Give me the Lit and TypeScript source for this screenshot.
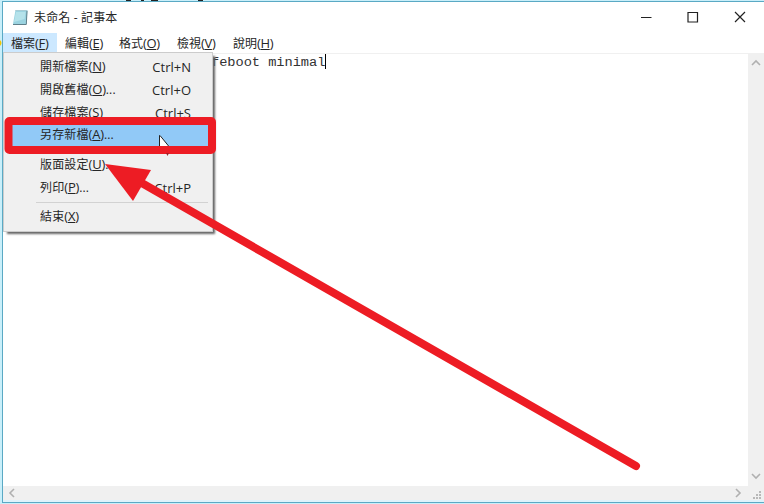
import { LitElement, html, css, svg } from "lit";
import { customElement } from "lit/decorators.js";

type Item = { label: string; key: string; more?: boolean; shortcut?: string; active?: boolean };

const MENUS: [string, string][] = [["檔案", "F"], ["編輯", "E"], ["格式", "O"], ["檢視", "V"], ["說明", "H"]];

const ITEMS: (Item | null)[] = [
  { label: "開新檔案", key: "N", shortcut: "Ctrl+N" },
  { label: "開啟舊檔", key: "O", more: true, shortcut: "Ctrl+O" },
  { label: "儲存檔案", key: "S", shortcut: "Ctrl+S" },
  { label: "另存新檔", key: "A", more: true, active: true },
  null,
  { label: "版面設定", key: "U", more: true },
  { label: "列印", key: "P", more: true, shortcut: "Ctrl+P" },
  null,
  { label: "結束", key: "X" },
];

@customElement("app-root")
export class AppRoot extends LitElement {
  static styles = css`
    :host {
      display: block;
      position: relative;
      box-sizing: border-box;
      width: 764px;
      height: 504px;
      overflow: hidden;
      padding: 1px 0 0 2px;
      background: #c9effa;
      color: #262626;
      font: 12px/20px "Open Sans", "Noto Sans CJK TC", sans-serif;
    }
    .window {
      box-sizing: border-box;
      width: 762px;
      height: 502px;
      display: flex;
      flex-direction: column;
      background: #fff;
      border: solid #5aa9c4;
      border-width: 1px 0 1px 1px;
    }
    .title {
      height: 31px;
      flex: none;
      display: flex;
      align-items: center;
      padding-left: 9px;
    }
    .name { margin-left: 6px; flex: 1; letter-spacing: 0.15px; }
    .title svg { display: block; }
    .bar {
      height: 20px;
      flex: none;
      display: flex;
      border-bottom: 1px solid #f0f0f0;
    }
    .menu {
      box-sizing: border-box;
      padding-left: 8px;
      height: 20px;
      white-space: nowrap;
      line-height: 21px;
    }
    .m0 { width: 54px; background: #cce8ff; }
    .m1 { width: 54px; }
    .m2 { width: 58px; }
    .m3 { width: 56px; }
    .k { font-size: 13px; line-height: 1; letter-spacing: -0.35px; }
    .k u { text-underline-offset: 1px; text-decoration-thickness: 1px; }
    .body {
      flex: 1;
      display: grid;
      grid-template-columns: 1fr 16px;
      grid-template-rows: 1fr 14px;
      border-bottom: 2px solid #dff3fb;
    }
    .text {
      padding: 0 0 0 208px;
      font: 13.7px/18px "Liberation Mono", monospace;
      white-space: pre;
      letter-spacing: -0.05px;
      color: #333;
    }
    .caret { display: inline-block; width: 1px; height: 15px; background: #000; vertical-align: -3px; }
    .track { background: #f0f0f0; display: flex; justify-content: space-between; align-items: center; }
    .v { flex-direction: column; }
    .popup {
      position: absolute;
      left: 3px;
      top: 52px;
      box-sizing: border-box;
      width: 210px;
      height: 180px;
      padding: 3px 2px 2px;
      background: #f0f0f0;
      border: 1px solid #ccc;
      box-shadow: 3px 3px 2px -1px #666;
    }
    .item {
      height: 22.7px;
      box-sizing: border-box;
      display: flex;
      align-items: center;
      padding: 0 19px 0 34px;
      white-space: nowrap;
    }
    .item .label { flex: 1; letter-spacing: 0.15px; }
    .item .k { letter-spacing: -0.2px; }
    .short { font-size: 13px; }
    .active { background: #91c9f7; }
    .sep { height: 1px; margin: 3px 2px 3px 30px; background: #d2d2d2; }
    .over { position: absolute; left: 0; top: 0; }
  `;

  render() {
    return html`
      <div class="window">
        <div class="title">
          <svg width="16" height="18" viewBox="0 0 16 18">
            <path d="M3.500 1H15.500L14.500 15H1Z" fill="#9bd3e0" />
            <path d="M4 3H13.500L12.500 10L2 13Z" fill="#b5e2ea" />
            <path d="M15 2L14.300 15.500H1" fill="none" stroke="#5f7f8a" />
            <path d="M3.500 1.500H15" stroke="#b4c3c8" stroke-dasharray="1 1" />
          </svg>
          <span class="name">未命名 - 記事本</span>
          <svg width="124" height="30" viewBox="0 0 124 30" fill="none" stroke="#222">
            <path d="M1 14.500H11.500" /><path d="M48 9.500H57.500V19H48Z" stroke-width="1.2" /><path d="M95 9L105 19M105 9L95 19" stroke-width="1.2" />
          </svg>
        </div>
        <div class="bar">
          ${MENUS.map(([l, k], i) => html`<div class="menu m${i}">${l}<span class="k">(<u>${k}</u>)</span></div>`)}
        </div>
        <div class="body">
          <div class="text">feboot minimal<span class="caret"></span></div>
          <div class="track v">${this.chevron("M4 11L8 7L12 11")}${this.chevron("M4 4L8 8L12 4")}</div>
          <div class="track">${this.chevron("M11 4L7 8L11 12")}${this.chevron("M4 4L8 8L4 12")}</div>
          <div class="track">
            <svg width="16" height="14" fill="#b8b8b8">
              ${[[11, 5], [8, 8], [11, 8], [5, 11], [8, 11], [11, 11]].map(([x, y]) => svg`<rect x=${x} y=${y} width="2" height="2" />`)}
            </svg>
          </div>
        </div>
      </div>
      <div class="popup">
        ${ITEMS.map((it) => it
          ? html`<div class="item ${it.active ? "active" : ""}">
              <span class="label">${it.label}<span class="k">(<u>${it.key}</u>)</span>${it.more ? "..." : ""}</span>
              <span class="short">${it.shortcut ?? ""}</span>
            </div>`
          : html`<div class="sep"></div>`)}
      </div>
      <svg class="over" width="764" height="504" viewBox="0 0 764 504">
        <path d="M126 0H131V1H126ZM141 0H144V1H141ZM151 0H158V1H151ZM198 0H203V1H198Z" fill="#222" />
        <path d="M0 40Q3 43 0 46Z" fill="#f2c400" />
        <path d="M159.500 135.500V149H171L160 135.500Z" fill="#fff" stroke="#222" />
        <rect x="8.500" y="121" width="203.500" height="29" rx="1" fill="none" stroke="#ed1c24" stroke-width="8" stroke-linejoin="round" />
        <path d="M166 153H169L167.500 156Z" fill="#a02028" />
        <path d="M140 182L636 466" stroke="#ed1c24" stroke-width="8" stroke-linecap="round" />
        <path d="M105 164L151 170L133 201Z" fill="#ed1c24" />
      </svg>
    `;
  }

  private chevron(d: string) {
    return html`<svg width="16" height="16" fill="none" stroke="#b0b0b0" stroke-width="1.6"><path d=${d} /></svg>`;
  }
}
